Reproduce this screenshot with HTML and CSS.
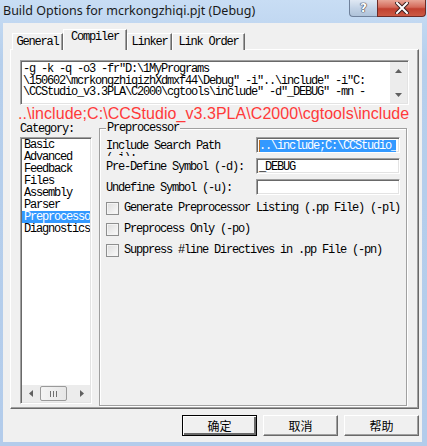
FILE: index.html
```html
<!DOCTYPE html>
<html>
<head>
<meta charset="utf-8">
<link rel="stylesheet" href="styles.css">
</head>
<body>
<div class="win">
  <div class="titlebar">
    <span class="title">Build Options for mcrkongzhiqi.pjt (Debug)</span>
    <div class="capbtns">
      <span class="cb help">?</span>
      <span class="cb close"><svg width="14" height="12" viewBox="0 0 14 12"><path d="M2 1 L12 11 M12 1 L2 11" stroke="#3a2020" stroke-width="4" stroke-linecap="square"/><path d="M2 1 L12 11 M12 1 L2 11" stroke="#ffffff" stroke-width="2" stroke-linecap="square"/></svg></span>
    </div>
  </div>
  <div class="body">
    <div class="tabs">
      <span class="tab t1">General</span>
      <span class="tab t2 active">Compiler</span>
      <span class="tab t3">Linker</span>
      <span class="tab t4">Link Order</span>
    </div>
    <div class="panel">
      <div class="cmd">
        <div class="cmdtext">-g -k -q -o3 -fr"D:\1MyPrograms<br>\150602\mcrkongzhiqizhXdmxf44\Debug" -i"..\include" -i"C:<br>\CCStudio_v3.3PLA\C2000\cgtools\include" -d"_DEBUG" -mn -</div>
        <div class="vscroll">
          <span class="sbtn"><svg width="7" height="4" viewBox="0 0 7 4"><path d="M3.5 0 L7 4 L0 4 Z" fill="#606060"/></svg></span>
          <span class="sbtn"><svg width="7" height="4" viewBox="0 0 7 4"><path d="M0 0 L7 0 L3.5 4 Z" fill="#606060"/></svg></span>
        </div>
      </div>
      <div class="note">..\include;C:\CCStudio_v3.3PLA\C2000\cgtools\include</div>
      <div class="main">
        <div class="cat">
          <div class="catlabel">Category:</div>
          <div class="list">
            <ul class="items">
              <li>Basic</li>
              <li>Advanced</li>
              <li>Feedback</li>
              <li>Files</li>
              <li>Assembly</li>
              <li>Parser</li>
              <li class="sel">Preprocessor</li>
              <li>Diagnostics</li>
            </ul>
            <div class="hscroll">
              <span class="hbtn"><svg width="4" height="7" viewBox="0 0 4 7"><path d="M4 0 L4 7 L0 3.5 Z" fill="#606060"/></svg></span>
              <span class="thumb"><svg width="8" height="6" viewBox="0 0 8 6"><path d="M0.5 0 V6 M3.5 0 V6 M6.5 0 V6" stroke="#707070" stroke-width="1"/></svg></span>
              <span class="hbtn"><svg width="4" height="7" viewBox="0 0 4 7"><path d="M0 0 L4 3.5 L0 7 Z" fill="#606060"/></svg></span>
            </div>
          </div>
        </div>
        <div class="group">
          <span class="legend">Preprocessor</span>
          <div class="frow">
            <div class="flabel">Include Search Path <span class="nw">(-i):</span></div>
            <div class="field"><span class="selbox"><span class="caret"></span>..\include;C:\CCStudio_v3.3PLA</span></div>
          </div>
          <div class="frow">
            <div class="flabel">Pre-Define Symbol <span class="nw">(-d):</span></div>
            <div class="field">_DEBUG</div>
          </div>
          <div class="frow">
            <div class="flabel">Undefine Symbol <span class="nw">(-u):</span></div>
            <div class="field"></div>
          </div>
          <div class="crow"><span class="chk"></span><span class="clabel">Generate Preprocessor Listing (.pp File) (-pl)</span></div>
          <div class="crow"><span class="chk"></span><span class="clabel">Preprocess Only (-po)</span></div>
          <div class="crow"><span class="chk"></span><span class="clabel">Suppress #line Directives in .pp File (-pn)</span></div>
        </div>
      </div>
    </div>
    <div class="buttons">
      <span class="btn default">确定</span>
      <span class="btn">取消</span>
      <span class="btn">帮助</span>
    </div>
  </div>
</div>
</body>
</html>
```
FILE: styles.css
```css
* { box-sizing: border-box; }
html, body { margin: 0; padding: 0; }
body {
  width: 427px;
  height: 446px;
  overflow: hidden;
  background: #b9d1ee;
  font-family: "Liberation Mono", "Courier New", monospace;
  font-size: 12px;
  letter-spacing: -1.2px;
  color: #000;
}
.win {
  width: 427px;
  height: 446px;
  display: flex;
  flex-direction: column;
  background: linear-gradient(#c8ddf4, #b6cfec 60px, #b3cceb);
}
.titlebar {
  height: 23px;
  flex: none;
  display: flex;
  justify-content: space-between;
  align-items: flex-start;
  padding-left: 3px;
}
.title {
  font-family: "Noto Sans", "Open Sans", sans-serif;
  font-size: 12.5px;
  letter-spacing: 0;
  line-height: 18px;
  padding-top: 2px;
  color: #1a1a1a;
  white-space: nowrap;
}
.capbtns { display: flex; margin-right: 1px; }
.cb {
  height: 17px;
  display: flex;
  align-items: center;
  justify-content: center;
}
.cb.help {
  width: 28px;
  border: 1px solid #6f819b;
  border-top: none;
  border-right: none;
  border-radius: 0 0 0 4px;
  background: linear-gradient(#dfe8f3, #c3d3e6 50%, #afc2d9);
  font-family: "DejaVu Sans", sans-serif;
  font-weight: bold;
  font-size: 12px;
  letter-spacing: 0;
  color: #fff;
  text-shadow: 0 0 1px #334, 0 0 1px #334, 0 0 1px #334;
}
.cb.close {
  width: 49px;
  border: 1px solid #6d2b26;
  border-top: none;
  border-radius: 0 0 4px 0;
  background: linear-gradient(#e8a596, #d46a5a 45%, #c1402f 55%, #cc5a44);
}
.body {
  flex: none;
  height: 419px;
  margin: 0 5px 0 3px;
  background: #f0f0f0;
  padding: 7px 3px 5px 7px;
  display: flex;
  flex-direction: column;
}
.tabs {
  height: 20px;
  display: flex;
  align-items: flex-end;
  padding-left: 2px;
  position: relative;
  z-index: 2;
  margin-bottom: -1px;
}
.tab {
  height: 17px;
  border-top: 1px solid #fff;
  border-left: 1px solid #fff;
  border-right: 1px solid #696969;
  box-shadow: inset -1px 0 #a0a0a0;
  text-align: center;
  line-height: 16px;
  background: #f0f0f0;
  white-space: nowrap;
}
.t1 { width: 51px; }
.t2 { width: 64px; }
.t3 { width: 45px; }
.t4 { width: 73px; }
.tab.active {
  height: 21px;
  line-height: 15px;
}
.panel {
  height: 360px;
  border: 1px solid;
  border-color: #fff #696969 #696969 #fff;
  box-shadow: inset -1px -1px #a0a0a0;
  padding: 10px 9px 0 9px;
  display: flex;
  flex-direction: column;
}
.cmd {
  height: 45px;
  flex: none;
  display: flex;
  border: 1px solid;
  border-color: #a0a0a0 #fff #fff #a0a0a0;
  box-shadow: inset 1px 1px #696969, inset -1px -1px #e3e3e3;
  padding: 1px;
  background: #fff;
}
.cmdtext {
  flex: 1;
  padding: 2px 0 0 1px;
  line-height: 11.7px;
  white-space: nowrap;
  overflow: hidden;
  background: #fff;
}
.vscroll {
  width: 17px;
  flex: none;
  display: flex;
  flex-direction: column;
  justify-content: space-between;
  background: #ececec;
}
.sbtn {
  height: 17px;
  display: flex;
  align-items: center;
  justify-content: center;
}
.note {
  height: 17px;
  flex: none;
  margin-left: -2px;
  font-family: "Liberation Sans", Arial, sans-serif;
  font-size: 16px;
  letter-spacing: 0.05px;
  line-height: 18px;
  color: #ff3a3a;
  white-space: nowrap;
  position: relative;
  z-index: 1;
}
.main {
  display: flex;
  gap: 7px;
}
.cat {
  width: 72px;
  flex: none;
}
.catlabel {
  height: 15px;
  line-height: 14px;
}
.list {
  height: 267px;
  border: 1px solid;
  border-color: #a0a0a0 #fff #fff #a0a0a0;
  box-shadow: inset 1px 1px #696969, inset -1px -1px #e3e3e3;
  padding: 1px;
  background: #fff;
  display: flex;
  flex-direction: column;
  justify-content: space-between;
}
.items {
  list-style: none;
  margin: 0;
  padding: 0;
}
.items li {
  height: 12px;
  line-height: 12px;
  padding-left: 2px;
  white-space: nowrap;
  overflow: hidden;
}
.items li.sel {
  background: #3399ff;
  color: #fff;
}
.hscroll {
  height: 17px;
  display: flex;
  align-items: center;
  justify-content: space-between;
  background: #ececec;
}
.hbtn {
  width: 17px;
  height: 17px;
  display: flex;
  align-items: center;
  justify-content: center;
}
.thumb {
  width: 27px;
  height: 15px;
  margin-right: 5px;
  border: 1px solid #9a9a9a;
  border-radius: 2px;
  background: linear-gradient(90deg, #f4f4f4, #e6e6e6);
  display: flex;
  align-items: center;
  justify-content: center;
}
.group {
  width: 308px;
  height: 278px;
  margin-top: 6px;
  border: 1px solid #a0a0a0;
  box-shadow: inset 1px 1px #fff, 1px 1px #fff;
  padding: 8px 6px 0 6px;
  position: relative;
}
.legend {
  position: absolute;
  top: -7px;
  left: 6px;
  padding: 0 1px;
  line-height: 13px;
  background: #f0f0f0;
}
.frow {
  height: 16px;
  display: flex;
  margin-bottom: 5px;
}
.flabel {
  width: 150px;
  height: 19px;
  flex: none;
  overflow: hidden;
  line-height: 12px;
  padding-top: 3px;
  padding-right: 4px;
}
.nw { white-space: nowrap; }
.field {
  width: 144px;
  height: 16px;
  flex: none;
  border: 1px solid;
  border-color: #a0a0a0 #fff #fff #a0a0a0;
  box-shadow: inset 1px 1px #696969, inset -1px -1px #e3e3e3;
  background: #fff;
  padding: 2px 2px 0 2px;
  line-height: 12px;
  white-space: nowrap;
  overflow: hidden;
  position: relative;
  z-index: 1;
}
.selbox {
  display: block;
  height: 12px;
  background: #3399ff;
  color: #fff;
  overflow: hidden;
  margin-right: 1px;
}
.caret {
  display: inline-block;
  width: 1px;
  height: 12px;
  vertical-align: top;
  background: #c07020;
  margin-right: -1px;
}
.crow {
  height: 16px;
  display: flex;
  align-items: center;
  gap: 5px;
  margin-bottom: 5px;
  line-height: 16px;
}
.clabel { white-space: nowrap; }
.chk {
  width: 13px;
  height: 13px;
  flex: none;
  border: 1px solid #8e8f8f;
  background: linear-gradient(135deg, #dcdcdc, #fbfbfb);
  box-shadow: inset 0 0 0 1px #f4f4f4;
}
.buttons {
  display: flex;
  justify-content: flex-end;
  gap: 6px;
  margin-top: 6px;
}
.btn {
  width: 75px;
  height: 21px;
  border: 1px solid;
  border-color: #fff #696969 #696969 #fff;
  box-shadow: inset -1px -1px #a0a0a0;
  font-family: "Noto Sans CJK SC", sans-serif;
  font-size: 12px;
  letter-spacing: 0;
  line-height: 19px;
  text-align: center;
  background: #f0f0f0;
}
.btn.default {
  border: 1px solid #000;
  box-shadow: inset 1px 1px #fff, inset -2px -2px #696969, inset -1px -1px #a0a0a0;
}
```
